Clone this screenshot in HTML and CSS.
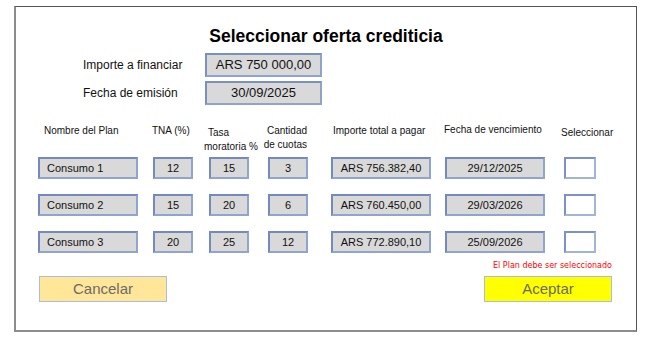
FILE: index.html
```html
<!DOCTYPE html>
<html lang="es">
<head>
<meta charset="utf-8">
<title>Seleccionar oferta crediticia</title>
<link rel="stylesheet" href="styles.css">
</head>
<body>
<div class="frame">
  <h1 class="title">Seleccionar oferta crediticia</h1>

  <div class="summary">
    <div class="label">Importe a financiar</div>
    <div class="field">ARS 750 000,00</div>
    <div class="label">Fecha de emisión</div>
    <div class="field">30/09/2025</div>
  </div>

  <div class="plans">
    <div class="hd hd-name">Nombre del Plan</div>
    <div class="hd hd-tna">TNA (%)</div>
    <div class="hd hd-tasa"><span class="tasa-1">Tasa</span><br>moratoria %</div>
    <div class="hd hd-cuotas">Cantidad<br>de cuotas</div>
    <div class="hd hd-importe">Importe total a pagar</div>
    <div class="hd hd-fecha">Fecha de vencimiento</div>
    <div class="hd hd-sel">Seleccionar</div>

    <div class="box w-name left">Consumo 1</div>
    <div class="box w-sm">12</div>
    <div class="box w-sm">15</div>
    <div class="box w-sm">3</div>
    <div class="box w-lg">ARS 756.382,40</div>
    <div class="box w-lg">29/12/2025</div>
    <div class="check"></div>

    <div class="box w-name left">Consumo 2</div>
    <div class="box w-sm">15</div>
    <div class="box w-sm">20</div>
    <div class="box w-sm">6</div>
    <div class="box w-lg">ARS 760.450,00</div>
    <div class="box w-lg">29/03/2026</div>
    <div class="check"></div>

    <div class="box w-name left">Consumo 3</div>
    <div class="box w-sm">20</div>
    <div class="box w-sm">25</div>
    <div class="box w-sm">12</div>
    <div class="box w-lg">ARS 772.890,10</div>
    <div class="box w-lg">25/09/2026</div>
    <div class="check"></div>
  </div>

  <div class="error">El Plan debe ser seleccionado</div>

  <div class="actions">
    <button class="btn btn-cancel">Cancelar</button>
    <button class="btn btn-ok">Aceptar</button>
  </div>
</div>
</body>
</html>
```

FILE: styles.css
```css
html, body {
  margin: 0;
  padding: 0;
  background: #ffffff;
}

body {
  font-family: "Liberation Sans", Arial, sans-serif;
  color: #111111;
}

.frame {
  box-sizing: border-box;
  width: 623px;
  height: 326px;
  margin: 6px 0 0 14px;
  border-top: 1px solid #555555;
  border-right: 1px solid #555555;
  border-left: 2px solid #8c8c8c;
  border-bottom: 2px solid #8c8c8c;
  background: #ffffff;
}

.title {
  margin: 19px 0 0 0;
  font-size: 17.5px;
  line-height: 20px;
  font-weight: bold;
  text-align: center;
  color: #000000;
}

.summary {
  display: grid;
  grid-template-columns: 122px 117px;
  grid-auto-rows: 24px;
  row-gap: 4px;
  align-items: center;
  margin: 7px 0 0 67px;
}

.label {
  font-size: 12px;
  line-height: 14px;
  color: #111111;
}

.field {
  box-sizing: border-box;
  height: 24px;
  background: #d9d9d9;
  border: 2px solid #8fa3cf;
  border-top-color: #7a90c2;
  border-left-color: #7a90c2;
  font-size: 13px;
  line-height: 20px;
  text-align: center;
  color: #111111;
}

.plans {
  display: grid;
  grid-template-columns: 115px 56px 59px 63px 114px 119px 72px;
  grid-template-rows: 18px 22px 22px 22px;
  row-gap: 15px;
  margin: 19px 0 0 22px;
}

.hd {
  font-size: 10px;
  line-height: 14px;
  color: #111111;
  white-space: nowrap;
}

.hd-name { padding-left: 6px; }
.hd-tna { margin-left: -1px; }
.hd-tasa { margin-left: -5px; padding-top: 2px; }
.tasa-1 { padding-left: 4px; }
.hd-cuotas { text-align: right; padding-right: 24px; margin-left: -6px; }
.hd-importe { padding-left: 2px; }
.hd-fecha { margin-left: -1px; margin-top: -1px; }
.hd-sel { margin-left: -3px; padding-top: 2px; }

.box {
  box-sizing: border-box;
  height: 22px;
  background: #d9d9d9;
  border: 2px solid #90a4d0;
  border-top-color: #7389bf;
  border-left-color: #7389bf;
  font-size: 11px;
  line-height: 18px;
  text-align: center;
  color: #111111;
}

.box.left {
  text-align: left;
  padding-left: 7px;
}

.w-name { width: 100px; }
.w-sm { width: 40px; }
.w-lg { width: 100px; }

.check {
  box-sizing: border-box;
  width: 32px;
  height: 22px;
  background: #ffffff;
  border: 2px solid #a3b4da;
  border-top-color: #7d92c4;
  border-left-color: #7d92c4;
}

.error {
  margin: 8px 24px 0 0;
  font-family: "DejaVu Sans", Verdana, sans-serif;
  font-size: 8px;
  line-height: 10px;
  text-align: right;
  color: #ff0000;
}

.actions {
  display: flex;
  justify-content: space-between;
  margin: 5px 24px 0 23px;
}

.btn {
  box-sizing: border-box;
  width: 128px;
  height: 26px;
  padding: 0;
  border: 1px solid #a7bee0;
  font-family: "Liberation Sans", Arial, sans-serif;
  font-size: 15px;
  line-height: 24px;
  color: #6b6b6b;
  text-align: center;
}

.btn-cancel { background: #ffe699; }
.btn-ok { background: #ffff00; }
```
